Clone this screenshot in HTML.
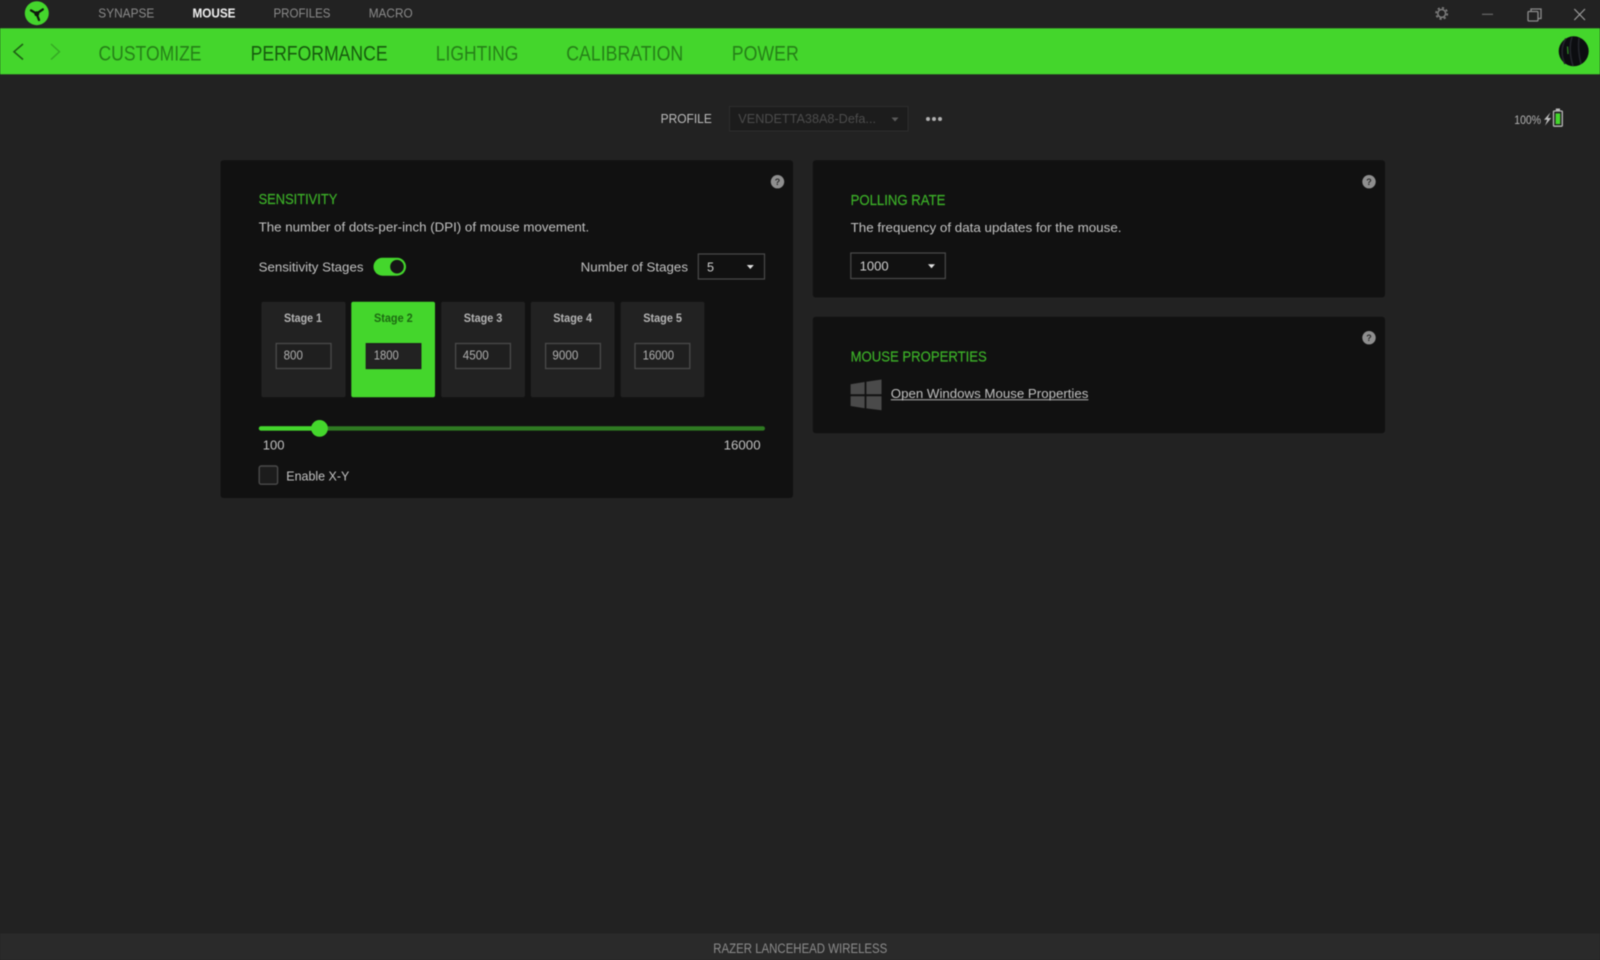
<!DOCTYPE html>
<html lang="en">
<head>
<meta charset="utf-8">
<title>Razer Synapse</title>
<style>
html,body{margin:0;padding:0;width:1600px;height:960px;overflow:hidden;background:#222}
svg{display:block;position:absolute;left:0;top:0;filter:blur(.5px)}
text{font-family:"Liberation Sans",Arial,sans-serif;font-size:13px;fill:#c2c2c2}
.nav{font-size:12.5px;fill:#8a8a8a}
.tab{font-size:21.5px;fill:#268018}
.sec{font-size:15px;fill:#3cb028;stroke:#3cb028;stroke-width:.2}
.lbl{font-weight:bold;font-size:12.2px;fill:#b5b5b5}
.val{font-size:12.5px;fill:#b0b0b0}
.box{fill:#1f1f1f;stroke:#4a4a4a;stroke-width:1.3}
.stage{fill:#222}
.help{fill:#8f8f8f}
.q{font-size:9px;font-weight:bold;fill:#2b2b2b;text-anchor:middle}
</style>
</head>
<body>
<svg width="1600" height="960" viewBox="0 0 1600 960" xmlns="http://www.w3.org/2000/svg">
<rect width="1600" height="960" fill="#222"/>

<!-- top nav -->
<circle cx="36.8" cy="13.2" r="12" fill="#44d62c"/>
<path d="M36.6 13.6L42.8 9.4M36.6 13.6L31 10.4M36.6 13.6L39 20" fill="none" stroke="#0e1a0c" stroke-width="2.3" stroke-linecap="round"/>
<circle cx="36.8" cy="13.8" r="2.5" fill="#0e1a0c"/>
<text class="nav" x="98.3" y="17.4" textLength="56" lengthAdjust="spacingAndGlyphs">SYNAPSE</text>
<text class="nav" x="192.5" y="17.4" textLength="43" lengthAdjust="spacingAndGlyphs" style="fill:#f0f0f0;font-weight:bold">MOUSE</text>
<text class="nav" x="273.5" y="17.4" textLength="57" lengthAdjust="spacingAndGlyphs">PROFILES</text>
<text class="nav" x="368.7" y="17.4" textLength="44" lengthAdjust="spacingAndGlyphs">MACRO</text>

<!-- window controls -->
<circle cx="1441.7" cy="13.4" r="3.9" fill="none" stroke="#7c7c7c" stroke-width="1.5"/>
<circle cx="1441.7" cy="13.4" r="5.6" fill="none" stroke="#7c7c7c" stroke-width="1.7" stroke-dasharray="2.2 2.2"/>
<path d="M1482 14.3H1493" stroke="#6a6a6a" stroke-width="1.2"/>
<rect x="1528" y="11.5" width="10" height="9.5" rx="1" fill="none" stroke="#8c8c8c" stroke-width="1.3"/>
<path d="M1531 11.5V9H1541V18.5H1538" fill="none" stroke="#8c8c8c" stroke-width="1.3"/>
<path d="M1574.3 9L1585 20M1585 9L1574.3 20" stroke="#9a9a9a" stroke-width="1.2"/>

<!-- green bar -->
<rect x="0" y="28.3" width="1600" height="46" fill="#44d62c"/>
<path d="M23 44L14 51.7L23 59.5" fill="none" stroke="#1f5f15" stroke-width="1.6"/>
<path d="M51 44L59.5 51.7L51 59.5" fill="none" stroke="#35a824" stroke-width="1.4"/>
<text class="tab" x="98.5" y="60.4" textLength="103" lengthAdjust="spacingAndGlyphs">CUSTOMIZE</text>
<text class="tab" x="250.6" y="60.4" textLength="137" lengthAdjust="spacingAndGlyphs" style="fill:#175a0e">PERFORMANCE</text>
<text class="tab" x="435.8" y="60.4" textLength="82.5" lengthAdjust="spacingAndGlyphs">LIGHTING</text>
<text class="tab" x="566.2" y="60.4" textLength="117" lengthAdjust="spacingAndGlyphs">CALIBRATION</text>
<text class="tab" x="731.8" y="60.4" textLength="67" lengthAdjust="spacingAndGlyphs">POWER</text>
<circle cx="1573.7" cy="51.3" r="15" fill="#0c0d10"/>
<path d="M1566 38.5C1561 46 1561 56 1565 64M1572 37C1569 46 1570 56 1573 66M1579 38C1578 46 1579 56 1581 64" fill="none" stroke="#23252b" stroke-width="1.6"/>
<path d="M1567.5 46.5L1568 54" stroke="#2f8f24" stroke-width="1.2"/>

<!-- profile row -->
<text x="660.6" y="123" textLength="51.2" lengthAdjust="spacingAndGlyphs" style="fill:#bcbcbc">PROFILE</text>
<rect x="729.5" y="106.5" width="178.5" height="24.5" fill="#1c1c1c" stroke="#2d2d2d"/>
<text x="738.3" y="123" textLength="137.7" lengthAdjust="spacingAndGlyphs" style="fill:#4c4c4c">VENDETTA38A8-Defa...</text>
<path d="M891.5 117.5H898.5L895 121.5Z" fill="#5a5a5a"/>
<circle cx="928" cy="119" r="2" fill="#b0b0b0"/><circle cx="934" cy="119" r="2" fill="#b0b0b0"/><circle cx="940" cy="119" r="2" fill="#b0b0b0"/>
<text x="1514.3" y="124" textLength="26.7" lengthAdjust="spacingAndGlyphs" style="font-size:11.5px;fill:#b4b4b4">100%</text>
<path d="M1550.4 112.5L1544 119.8H1547.3L1545 125.6L1551.2 118H1547.8Z" fill="#c0c0c0"/>
<rect x="1553.5" y="111" width="8.8" height="15.2" rx="1" fill="none" stroke="#b8b8b8" stroke-width="1.3"/>
<rect x="1555.8" y="108.5" width="4.2" height="2.2" fill="#b8b8b8"/>
<rect x="1555.6" y="113.4" width="4.6" height="10.7" fill="#44d62c"/>

<!-- sensitivity card -->
<rect x="220.5" y="160.3" width="572.5" height="337.7" rx="3" fill="#111"/>
<circle class="help" cx="777.5" cy="181.7" r="6.7"/>
<text class="q" x="777.5" y="185">?</text>
<text class="sec" x="258.6" y="203.8" textLength="78.7" lengthAdjust="spacingAndGlyphs">SENSITIVITY</text>
<text x="258.6" y="231.7" textLength="330.6" lengthAdjust="spacingAndGlyphs">The number of dots-per-inch (DPI) of mouse movement.</text>
<text x="258.6" y="271.7" textLength="104.9" lengthAdjust="spacingAndGlyphs">Sensitivity Stages</text>
<rect x="373.5" y="257.7" width="32.5" height="18" rx="9" fill="#44d62c"/>
<circle cx="397" cy="266.7" r="6.8" fill="#151515"/>
<text x="580.7" y="271.7" textLength="107.3" lengthAdjust="spacingAndGlyphs">Number of Stages</text>
<rect x="698.3" y="254" width="66.2" height="25" fill="#111" stroke="#4a4a4a" stroke-width="1.2"/>
<text x="707" y="271.7" textLength="7" lengthAdjust="spacingAndGlyphs" style="fill:#d0d0d0">5</text>
<path d="M746.8 265H753.8L750.3 269Z" fill="#e0e0e0"/>

<rect class="stage" x="261.5" y="301.7" width="84" height="95.6" rx="2"/>
<rect x="351.3" y="301.7" width="83.7" height="95.6" rx="2" fill="#44d62c"/>
<rect class="stage" x="441.2" y="301.7" width="83.7" height="95.6" rx="2"/>
<rect class="stage" x="530.8" y="301.7" width="83.7" height="95.6" rx="2"/>
<rect class="stage" x="620.7" y="301.7" width="83.7" height="95.6" rx="2"/>

<text class="lbl" x="284" y="321.8" textLength="38" lengthAdjust="spacingAndGlyphs">Stage 1</text>
<text class="lbl" x="374" y="321.8" textLength="38.7" lengthAdjust="spacingAndGlyphs" style="fill:#1d6a12">Stage 2</text>
<text class="lbl" x="463.8" y="321.8" textLength="38.5" lengthAdjust="spacingAndGlyphs">Stage 3</text>
<text class="lbl" x="553.3" y="321.8" textLength="38.7" lengthAdjust="spacingAndGlyphs">Stage 4</text>
<text class="lbl" x="643.2" y="321.8" textLength="38.8" lengthAdjust="spacingAndGlyphs">Stage 5</text>

<rect class="box" x="276.2" y="343.5" width="54.8" height="25"/>
<rect x="366.3" y="343.7" width="54.5" height="24.8" fill="#222" stroke="#1d1d1d" stroke-width="1.3"/>
<rect class="box" x="455.6" y="343.5" width="54.8" height="25"/>
<rect class="box" x="545.6" y="343.5" width="54.8" height="25"/>
<rect class="box" x="635" y="343.5" width="54.8" height="25"/>
<text class="val" x="283.6" y="359.7" textLength="19.3" lengthAdjust="spacingAndGlyphs">800</text>
<text class="val" x="373.7" y="359.7" textLength="25.1" lengthAdjust="spacingAndGlyphs">1800</text>
<text class="val" x="462.8" y="359.7" textLength="26" lengthAdjust="spacingAndGlyphs">4500</text>
<text class="val" x="552.4" y="359.7" textLength="25.9" lengthAdjust="spacingAndGlyphs">9000</text>
<text class="val" x="642.6" y="359.7" textLength="31.4" lengthAdjust="spacingAndGlyphs">16000</text>

<rect x="258.8" y="426.2" width="506.2" height="4.4" rx="2.2" fill="#2f7a22"/>
<rect x="258.8" y="426.2" width="60" height="4.4" rx="2.2" fill="#44d62c"/>
<circle cx="319.5" cy="428.4" r="8.4" fill="#44d62c"/>
<text x="262.8" y="449.7" textLength="21.7" lengthAdjust="spacingAndGlyphs">100</text>
<text x="723.6" y="449.7" textLength="37" lengthAdjust="spacingAndGlyphs">16000</text>
<rect x="259.2" y="466" width="18.4" height="18.2" rx="2" fill="#1c1c1c" stroke="#4a4a4a" stroke-width="1.4"/>
<text x="286.3" y="480.4" textLength="63" lengthAdjust="spacingAndGlyphs">Enable X-Y</text>

<!-- polling card -->
<rect x="812.8" y="160.3" width="572.2" height="137.2" rx="3" fill="#111"/>
<circle class="help" cx="1369" cy="181.7" r="6.7"/>
<text class="q" x="1369" y="185">?</text>
<text class="sec" x="850.6" y="205" textLength="94.8" lengthAdjust="spacingAndGlyphs">POLLING RATE</text>
<text x="850.6" y="232" textLength="270.9" lengthAdjust="spacingAndGlyphs">The frequency of data updates for the mouse.</text>
<rect x="850.8" y="253" width="94.5" height="25.5" fill="#111" stroke="#4a4a4a" stroke-width="1.2"/>
<text x="859.6" y="270.7" textLength="29" lengthAdjust="spacingAndGlyphs" style="fill:#d0d0d0">1000</text>
<path d="M928 264.3H935L931.5 268.3Z" fill="#e0e0e0"/>

<!-- mouse properties card -->
<rect x="812.8" y="316.7" width="572.2" height="116.6" rx="3" fill="#111"/>
<circle class="help" cx="1369" cy="337.7" r="6.7"/>
<text class="q" x="1369" y="341">?</text>
<text class="sec" x="850.6" y="361.6" textLength="136.2" lengthAdjust="spacingAndGlyphs">MOUSE PROPERTIES</text>
<path d="M850.6 384.3L864.6 382V394.3H850.6ZM866.4 381.7L881.5 379.5V394.3H866.4ZM850.6 396.2H864.6V408.2L850.6 406ZM866.4 396.2H881.5V410.3L866.4 408.4Z" fill="#4a4a4a"/>
<text x="890.8" y="398" textLength="197.6" lengthAdjust="spacingAndGlyphs" style="fill:#c0c0c0">Open Windows Mouse Properties</text>
<path d="M890.8 399.7H1088.4" stroke="#b0b0b0" stroke-width="1"/>

<!-- bottom bar -->
<rect x="0" y="933.3" width="1600" height="26.7" fill="#2a2a2a"/>
<text x="713.3" y="952.8" textLength="174" lengthAdjust="spacingAndGlyphs" style="font-size:13.5px;fill:#8c8c8c">RAZER LANCEHEAD WIRELESS</text>
</svg>
</body>
</html>
